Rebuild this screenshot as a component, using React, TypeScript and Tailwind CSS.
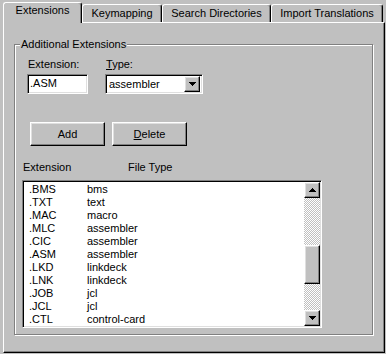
import React from 'react';

// Win95-style property sheet: "Extensions" tab of an editor settings dialog

const raised =
  'border border-t-white border-l-white border-b-black border-r-black shadow-[inset_-1px_-1px_#808080,inset_1px_1px_#dfdfdf] bg-[#c0c0c0]';
const sunken =
  'border border-t-[#808080] border-l-[#808080] border-b-white border-r-white shadow-[inset_1px_1px_#000,inset_-1px_-1px_#dfdfdf] bg-white';

const Arrow = ({ up = false }: { up?: boolean }) => (
  <svg width="7" height="4" viewBox="0 0 7 4" shapeRendering="crispEdges">
    <path
      fill="#000"
      d={
        up
          ? 'M3 0h1v1H3z M2 1h3v1H2z M1 2h5v1H1z M0 3h7v1H0z'
          : 'M0 0h7v1H0z M1 1h5v1H1z M2 2h3v1H2z M3 3h1v1H3z'
      }
    />
  </svg>
);

const rows: [string, string][] = [
  ['.BMS', 'bms'],
  ['.TXT', 'text'],
  ['.MAC', 'macro'],
  ['.MLC', 'assembler'],
  ['.CIC', 'assembler'],
  ['.ASM', 'assembler'],
  ['.LKD', 'linkdeck'],
  ['.LNK', 'linkdeck'],
  ['.JOB', 'jcl'],
  ['.JCL', 'jcl'],
  ['.CTL', 'control-card'],
];

const tabs = [
  { label: 'Keymapping', w: 'w-[80px]' },
  { label: 'Search Directories', w: 'w-[109px]' },
  { label: 'Import Translations', w: 'w-[112px]' },
];

export default function App() {
  return (
    <div className="w-[386px] h-[354px] bg-[#c0c0c0] pt-[2px] pl-[3px] text-[11px] leading-[13px] text-black font-['Liberation_Sans',Arial,sans-serif] select-none">
      {/* tab strip */}
      <div className="flex items-end h-[20px]">
        <div className="relative z-10 w-[79px] h-[21px] -mb-[1px] bg-[#c0c0c0] rounded-t-[3px] border-l border-t border-r border-l-white border-t-white border-r-black shadow-[inset_-1px_0_#808080] pt-[1px] text-center">
          Extensions
        </div>
        {tabs.map((t) => (
          <div
            key={t.label}
            className={`${t.w} h-[18px] rounded-t-[3px] border-l border-t border-r border-l-white border-t-white border-r-black shadow-[inset_-1px_0_#808080] pt-[2px] text-center`}
          >
            {t.label}
          </div>
        ))}
      </div>

      {/* page */}
      <div className="w-[382px] h-[331px] border border-t-white border-l-white border-b-black border-r-black shadow-[inset_-1px_-1px_#808080]">
        <fieldset className="ml-[10px] mt-[15px] w-[359px] h-[297px] border border-[#808080] shadow-[inset_1px_1px_#fff,1px_1px_#fff]">
          <legend className="ml-[5px] px-[1px] bg-[#c0c0c0] leading-[13px]">Additional Extensions</legend>

          {/* extension / type */}
          <div className="flex ml-[12px] mt-[7px]">
            <div className="flex flex-col w-[61px]">
              <span className="pl-[1px]">Extension:</span>
              <div className={`${sunken} mt-[3px] h-[20px] pl-[2px] pt-[2px]`}>.ASM</div>
            </div>
            <div className="flex flex-col ml-[17px] w-[98px]">
              <span className="pl-[1px]">
                <u>T</u>ype:
              </span>
              <div className={`${sunken} mt-[3px] h-[20px] flex items-center pl-[3px] pr-[2px]`}>
                <span className="flex-1">assembler</span>
                <div className={`${raised} w-[16px] h-[16px] flex items-center justify-center`}>
                  <Arrow />
                </div>
              </div>
            </div>
          </div>

          {/* buttons */}
          <div className="flex gap-[7px] ml-[15px] mt-[28px]">
            <button className={`${raised} w-[75px] h-[24px] text-[11px] leading-[13px]`}>Add</button>
            <button className={`${raised} w-[75px] h-[24px] text-[11px] leading-[13px]`}>
              <u>D</u>elete
            </button>
          </div>

          {/* list header */}
          <div className="flex ml-[8px] mt-[15px]">
            <span className="w-[105px]">Extension</span>
            <span>File Type</span>
          </div>

          {/* list */}
          <div className={`${sunken} ml-[7px] mt-[6px] w-[300px] h-[148px] flex p-[1px]`}>
            <div className="flex-1 pt-[1px]">
              {rows.map(([ext, type]) => (
                <div key={ext} className="flex h-[13px]">
                  <span className="w-[63px] pl-[5px]">{ext}</span>
                  <span>{type}</span>
                </div>
              ))}
            </div>
            <div className="w-[16px] flex flex-col">
              <div className={`${raised} w-[16px] h-[16px] flex items-center justify-center`}>
                <Arrow up />
              </div>
              <div className="flex-1 flex flex-col bg-[repeating-conic-gradient(#c0c0c0_0_25%,#fff_0_50%)] bg-[length:2px_2px]">
                <div className="h-[47px]" />
                <div className={`${raised} w-[16px] h-[39px]`} />
              </div>
              <div className={`${raised} w-[16px] h-[16px] flex items-center justify-center`}>
                <Arrow />
              </div>
            </div>
          </div>
        </fieldset>
      </div>
    </div>
  );
}
